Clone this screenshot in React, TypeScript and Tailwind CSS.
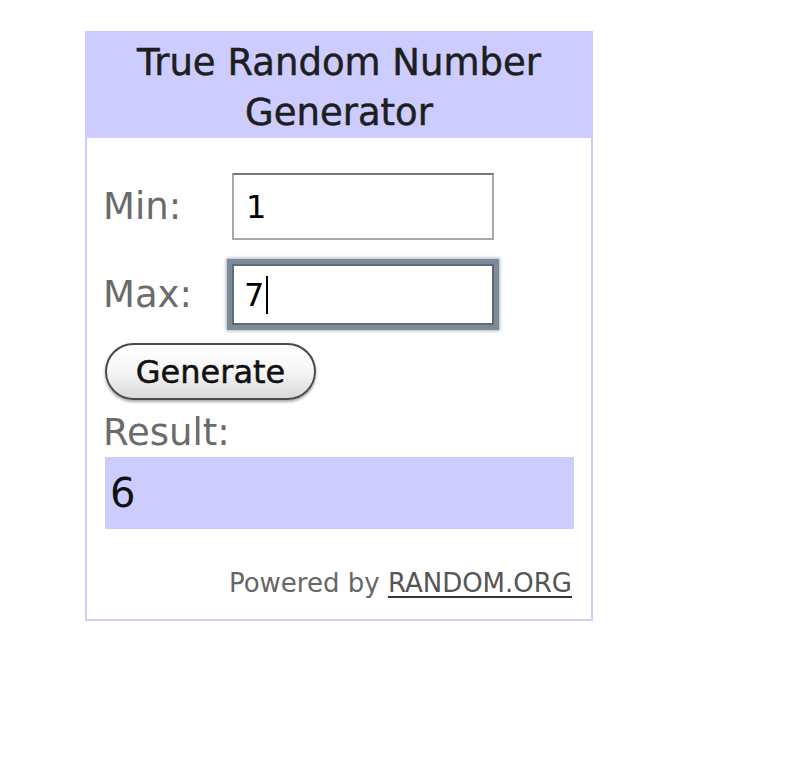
export default function App() {
  return (
    <div className="min-h-[768px] w-[793px] bg-white pt-[31px] pl-[85px] font-['DejaVu_Sans',_Verdana,_sans-serif]">
      <div className="w-[508px] border-2 border-[#ccccff] bg-white">
        {/* Header */}
        <div className="bg-[#ccccff] pt-[5px] text-center text-[37px] leading-[50px] text-[#1e1e1e] [-webkit-text-stroke:0.5px_#1e1e1e]">
          True Random Number
          <br />
          Generator
        </div>

        {/* Body */}
        <div className="pl-[16px] pr-[17px] pb-[21px]">
          {/* Min */}
          <div className="mt-[35px] flex items-center">
            <span className="w-[129px] text-[37px] leading-[40px] text-[#6b6b6b]">Min:</span>
            <div className="flex h-[67px] w-[262px] items-center border-2 border-[#a8a8a8] border-t-[#777] pl-[12px] text-[32px] text-black">
              1
            </div>
          </div>

          {/* Max */}
          <div className="mt-[24px] flex items-center">
            <span className="w-[129px] text-[37px] leading-[40px] text-[#6b6b6b]">Max:</span>
            <div className="flex h-[61px] w-[262px] items-center border-2 border-[#5d6a78] bg-white pl-[10px] text-[32px] text-black shadow-[0_0_0_5px_#7d8b99,0_0_3px_6px_#a9b4bf]">
              7<span className="ml-[2px] inline-block h-[38px] w-[2px] bg-black" />
            </div>
          </div>

          {/* Generate */}
          <button className="mt-[18px] ml-[2px] flex h-[57px] w-[211px] items-center justify-center rounded-full border-2 border-[#4a4a4a] bg-gradient-to-b from-white via-[#f6f6f6] to-[#d9d9d9] text-[32px] text-[#111] shadow-[0_2px_3px_rgba(0,0,0,0.35)] [-webkit-text-stroke:0.5px_#111]">
            Generate
          </button>

          {/* Result */}
          <div className="mt-[13px] text-[37px] leading-[40px] text-[#6b6b6b]">Result:</div>
          <div className="mt-[4px] ml-[2px] flex h-[72px] items-center bg-[#ccccff] pl-[5px] text-[40px] text-[#111]">
            6
          </div>

          {/* Footer */}
          <div className="mt-[39px] pr-[2px] text-right text-[26px] leading-[30px] text-[#666]">
            Powered by{" "}
            <a className="text-[#555] underline decoration-[#333] underline-offset-4" href="#">
              RANDOM.ORG
            </a>
          </div>
        </div>
      </div>
    </div>
  );
}
